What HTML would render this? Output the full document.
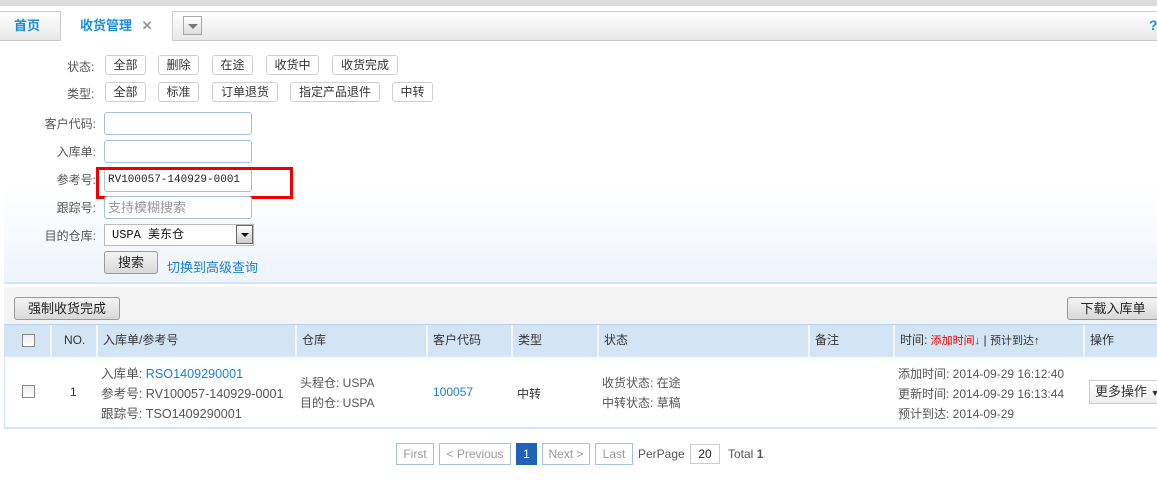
<!DOCTYPE html>
<html><head><meta charset="utf-8">
<style>
*{margin:0;padding:0;box-sizing:border-box}
body{width:1157px;height:502px;background:#fff;font-family:"Liberation Sans","Noto Sans CJK SC",sans-serif;font-size:12px;color:#333;position:relative;overflow:hidden}
.a{position:absolute;white-space:nowrap}
.top{left:0;top:0;width:1157px;height:6px;background:#dcdcdc}
.tabs{left:0;top:11px;width:1157px;height:30px;background:linear-gradient(#fff,#e8e8e8);border-top:1px solid #ccc;border-bottom:1px solid #c8c8c8}
.tab{top:11px;height:31px;font-weight:bold;color:#1a8fd8;font-size:13px;line-height:30px}
.panel{left:4px;top:41px;width:1153px;height:243px;background:linear-gradient(#fff 60%,#eef4fb);border-bottom:2px solid #d6e5f5}
.btn{height:20px;border:1px solid #d0d0d0;border-radius:3px;background:#fff;line-height:18px;text-align:center;color:#333}
.lbl{color:#555;text-align:right;width:96px;left:0}
.inp{height:23px;border:1px solid #a9bfd6;border-radius:3px;background:#fff;left:104px;width:148px}
.gbtn{border:1px solid #999;border-radius:3px;background:linear-gradient(#f5f5f5,#d8d8d8);text-align:center;font-size:13px;color:#222}
.hdr{left:4px;top:324px;width:1153px;height:33px;background:#d3e4f5;border-top:1px solid #b9d3ee}
.hc{top:325px;height:32px;border-left:2px solid #f2f7fc;line-height:31px;padding-left:5px;font-size:12px;color:#333}
.cb{width:13px;height:13px;border:1px solid #888;background:linear-gradient(#eee,#fff)}
.blue{color:#1a7fd0}
.pg{top:443px;height:22px;border:1px solid #a9c0dd;color:#999;line-height:20px;text-align:center;font-size:12px}
</style></head><body>
<div class="a top"></div>
<div class="a tabs"></div>
<div class="a tab" style="left:14px">首页</div>
<div class="a" style="left:60px;top:11px;width:113px;height:31px;background:#fff;border-left:1px solid #ccc;border-right:1px solid #ccc"></div>
<div class="a tab" style="left:80px">收货管理 <span style="color:#999;margin-left:6px">✕</span></div>
<div class="a" style="left:183px;top:16px;width:19px;height:19px;border:1px solid #aaa;background:linear-gradient(#fff,#ddd)"><div style="margin:7px auto 0;width:0;height:0;border-left:5px solid transparent;border-right:5px solid transparent;border-top:5px solid #777"></div></div>
<div class="a" style="left:1149px;top:17px;color:#1a8fd8;font-weight:bold;font-size:14px">?</div>

<div class="a panel"></div>
<div class="a" style="left:67px;top:58px;color:#555">状态:</div>
<div class="a btn" style="left:105px;top:55px;width:41px">全部</div>
<div class="a btn" style="left:158px;top:55px;width:41px">删除</div>
<div class="a btn" style="left:212px;top:55px;width:41px">在途</div>
<div class="a btn" style="left:266px;top:55px;width:53px">收货中</div>
<div class="a btn" style="left:332px;top:55px;width:66px">收货完成</div>
<div class="a" style="left:67px;top:85px;color:#555">类型:</div>
<div class="a btn" style="left:105px;top:82px;width:41px">全部</div>
<div class="a btn" style="left:158px;top:82px;width:41px">标准</div>
<div class="a btn" style="left:212px;top:82px;width:66px">订单退货</div>
<div class="a btn" style="left:290px;top:82px;width:90px">指定产品退件</div>
<div class="a btn" style="left:392px;top:82px;width:41px">中转</div>

<div class="a lbl" style="top:115px">客户代码:</div>
<div class="a inp" style="top:112px"></div>
<div class="a lbl" style="top:143px">入库单:</div>
<div class="a inp" style="top:140px"></div>
<div class="a lbl" style="top:171px">参考号:</div>
<div class="a inp" style="top:169px;font-family:'Liberation Mono',monospace;font-size:11px;line-height:21px;padding-left:3px;color:#222">RV100057-140929-0001</div>
<div class="a" style="left:96px;top:167px;width:197px;height:32px;border:3px solid #e00"></div>
<div class="a lbl" style="top:199px">跟踪号:</div>
<div class="a inp" style="top:196px;color:#999;font-size:13px;line-height:21px;padding-left:3px">支持模糊搜索</div>
<div class="a lbl" style="top:227px">目的仓库:</div>
<div class="a" style="left:104px;top:224px;width:150px;height:22px;border:1px solid #bbb;background:#fff;font-family:'Liberation Mono','Noto Sans CJK SC',monospace;font-size:12px;line-height:20px;padding-left:7px;color:#111">USPA 美东仓</div>
<div class="a" style="left:236px;top:225px;width:17px;height:19px;border:1px solid #666;background:linear-gradient(#fff,#ccc)"><div style="margin:7px auto 0;width:0;height:0;border-left:4px solid transparent;border-right:4px solid transparent;border-top:4px solid #000"></div></div>
<div class="a gbtn" style="left:104px;top:251px;width:54px;height:23px;line-height:21px">搜索</div>
<div class="a blue" style="left:167px;top:257px;font-size:13px">切换到高级查询</div>

<div class="a" style="left:4px;top:287px;width:1153px;height:37px;background:#f4f4f4"></div>
<div class="a gbtn" style="left:14px;top:297px;width:106px;height:23px;line-height:21px">强制收货完成</div>
<div class="a gbtn" style="left:1067px;top:297px;width:92px;height:23px;line-height:21px">下载入库单</div>

<div class="a hdr"></div>
<div class="a cb" style="left:22px;top:334px"></div>
<div class="a hc" style="left:50px;width:46px;padding-left:12px">NO.</div>
<div class="a hc" style="left:96px;width:199px">入库单/参考号</div>
<div class="a hc" style="left:295px;width:131px">仓库</div>
<div class="a hc" style="left:426px;width:85px">客户代码</div>
<div class="a hc" style="left:511px;width:86px">类型</div>
<div class="a hc" style="left:597px;width:211px">状态</div>
<div class="a hc" style="left:808px;width:85px">备注</div>
<div class="a hc" style="left:893px;width:190px">时间: <span style="color:#e00;font-size:11px">添加时间↓</span> | <span style="font-size:11px">预计到达↑</span></div>
<div class="a hc" style="left:1083px;width:74px">操作</div>

<div class="a" style="left:4px;top:357px;width:1153px;height:72px;border-left:1px solid #d6e5f5;border-bottom:2px solid #d6e5f5"></div>
<div class="a cb" style="left:22px;top:385px"></div>
<div class="a" style="left:70px;top:385px">1</div>
<div class="a" style="left:101px;top:364px;line-height:20px;color:#555;font-size:12.6px">入库单: <span class="blue">RSO1409290001</span><br>参考号: RV100057-140929-0001<br>跟踪号: TSO1409290001</div>
<div class="a" style="left:300px;top:373px;line-height:20px;color:#555">头程仓: USPA<br>目的仓: USPA</div>
<div class="a blue" style="left:433px;top:385px">100057</div>
<div class="a" style="left:517px;top:385px">中转</div>
<div class="a" style="left:602px;top:373px;line-height:20px;color:#555">收货状态: 在途<br>中转状态: 草稿</div>
<div class="a" style="left:898px;top:364px;line-height:20px;color:#555">添加时间: 2014-09-29 16:12:40<br>更新时间: 2014-09-29 16:13:44<br>预计到达: 2014-09-29</div>
<div class="a" style="left:1089px;top:380px;width:70px;height:24px;border:1px solid #ccc;background:linear-gradient(#fff,#eee);line-height:22px;padding-left:5px;color:#333;font-size:13px">更多操作 <span style="font-size:9px">▼</span></div>

<div class="a pg" style="left:396px;width:38px">First</div>
<div class="a pg" style="left:439px;width:72px">&lt; Previous</div>
<div class="a pg" style="left:516px;width:21px;background:#1f62b8;color:#fff;border-color:#1f62b8">1</div>
<div class="a pg" style="left:542px;width:48px">Next &gt;</div>
<div class="a pg" style="left:595px;width:38px">Last</div>
<div class="a" style="left:638px;top:447px;color:#555">PerPage</div>
<div class="a" style="left:690px;top:444px;width:30px;height:20px;border:1px solid #ccc;text-align:center;line-height:18px;color:#222">20</div>
<div class="a" style="left:728px;top:447px;color:#555">Total <b>1</b></div>
</body></html>
